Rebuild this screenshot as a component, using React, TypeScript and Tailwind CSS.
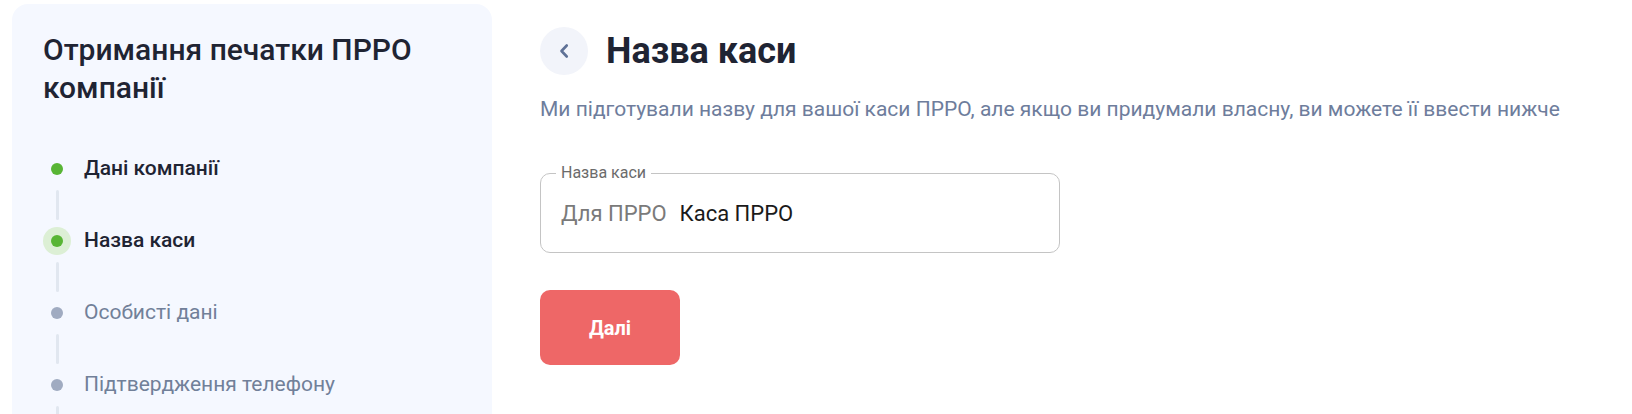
import React from "react";

const steps = [
  { label: "Дані компанії", state: "done" },
  { label: "Назва каси", state: "active" },
  { label: "Особисті дані", state: "todo" },
  { label: "Підтвердження телефону", state: "todo" },
];

function Dot({ state }: { state: string }) {
  if (state === "active") {
    return (
      <div className="flex h-[28px] w-[28px] items-center justify-center rounded-full bg-[#dcefd5]">
        <div className="h-[12px] w-[12px] rounded-full bg-[#58b535]" />
      </div>
    );
  }
  return (
    <div className="flex h-[28px] w-[28px] items-center justify-center">
      <div
        className={
          state === "done"
            ? "h-[12px] w-[12px] rounded-full bg-[#58b535]"
            : "h-[12px] w-[12px] rounded-full bg-[#a0abc1]"
        }
      />
    </div>
  );
}

export default function App() {
  return (
    <div
      className="flex h-[414px] w-[1632px] overflow-hidden bg-white"
      style={{ fontFamily: "Roboto, 'Noto Sans', sans-serif" }}
    >
      <aside className="ml-[12px] mt-[4px] h-[440px] w-[480px] shrink-0 rounded-[16px] bg-[#f5f8ff] pl-[31px] pt-[27px]">
        <h1 className="text-[30px] font-medium leading-[38px] text-[#1f2433]">
          Отримання печатки ПРРО
          <br />
          компанії
        </h1>
        <div className="mt-[48px] flex flex-col">
          {steps.map((s, i) => (
            <div key={i} className="flex flex-col">
              <div className="flex h-[28px] items-center gap-[13px]">
                <Dot state={s.state} />
                <span
                  className={
                    s.state === "todo"
                      ? "text-[21px] font-normal text-[#718099]"
                      : "text-[21px] font-medium text-[#1f2433]"
                  }
                >
                  {s.label}
                </span>
              </div>
              <div className="flex h-[44px] w-[28px] justify-center py-[7px]">
                <div className="h-full w-[3px] rounded-full bg-[#e1e7f0]" />
              </div>
            </div>
          ))}
        </div>
      </aside>

      <main className="ml-[48px] flex flex-col pt-[27px]">
        <div className="flex items-center gap-[18px]">
          <button className="flex h-[48px] w-[48px] items-center justify-center rounded-full bg-[#f2f4fa]">
            <svg width="12" height="16" viewBox="0 0 12 16" fill="none">
              <path
                d="M8.75 2.5 L3.5 8 L8.75 13.5"
                stroke="#5f7196"
                strokeWidth="2.6"
                strokeLinecap="round"
                strokeLinejoin="round"
              />
            </svg>
          </button>
          <h2 className="text-[36px] font-bold leading-[48px] text-[#1f2433]">Назва каси</h2>
        </div>
        <p className="mt-[20px] text-[21px] leading-[28px] text-[#6e7d9c]">
          Ми підготували назву для вашої каси ПРРО, але якщо ви придумали власну, ви можете її ввести нижче
        </p>
        <fieldset className="mt-[42px] h-[88px] w-[520px] rounded-[10px] border border-[#c4c4c4] px-[15px] pb-[7px]">
          <legend className="px-[5px] text-[16px] leading-[16px] text-[#6b6b6b]">Назва каси</legend>
          <div className="flex h-[64px] items-center pl-[5px] text-[22px]">
            <span className="text-[#7a7a7a]">Для ПРРО</span>
            <span className="ml-[13px] text-[#1a1a1a]">Каса ПРРО</span>
          </div>
        </fieldset>
        <button className="mt-[37px] h-[75px] w-[140px] rounded-[10px] bg-[#ee6767] text-[20px] font-bold text-white">
          Далі
        </button>
      </main>
    </div>
  );
}
